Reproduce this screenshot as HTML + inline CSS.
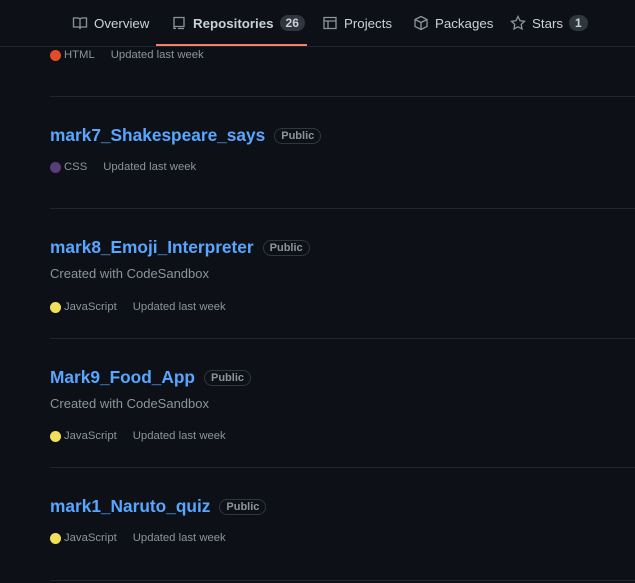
<!DOCTYPE html>
<html><head><style>
body{margin:0;width:635px;height:583px;background:#0d1117;font-family:"Liberation Sans",sans-serif;color:#8b949e;overflow:hidden;position:relative}
.nav{position:absolute;left:0;top:0;width:635px;height:46px;border-bottom:1px solid #21262d}
.tab{position:absolute;top:15px;font-size:13.3px;color:#c9d1d9;display:flex;align-items:center;gap:6px}
.cnt{background:#30363d;color:#c9d1d9;border-radius:10px;font-size:12px;padding:1px 6px;font-weight:bold}
.ul{position:absolute;left:156px;top:44px;width:151px;height:2px;background:#f78166}
.sep{position:absolute;left:50px;right:0;height:1px;background:#21262d}
.t{position:absolute;left:50px;font-size:17.3px;font-weight:bold;color:#58a6ff;display:flex;align-items:center}
.pub{font-size:11px;font-weight:bold;color:#8b949e;border:1px solid #30363d;border-radius:10px;padding:1px 6px;margin-left:9px}
.d{position:absolute;left:50px;font-size:13px;color:#8b949e}
.m{position:absolute;left:50px;font-size:11.3px;color:#8b949e;display:flex;align-items:center}
.dot{width:11px;height:11px;border-radius:50%;display:inline-block;margin-right:3px}
.up{margin-left:16px}
svg{fill:none;stroke:#8b949e;stroke-width:1.3}
</style></head><body>
<div class="nav">
<div class="tab" style="left:72px"><svg width="16" height="16" viewBox="0 0 16 16"><path d="M1.5 3h5l1.5 1v9l-1.5-1h-5zM14.5 3h-5L8 4v9l1.5-1h5z"/></svg>Overview</div>
<div class="tab" style="left:171px;font-weight:bold"><svg width="16" height="16" viewBox="0 0 16 16"><path d="M3 2.5h10v9H3zM3 11.5v2h2M7 13.5h6"/></svg>Repositories <span class="cnt">26</span></div>
<div class="tab" style="left:322px"><svg width="16" height="16" viewBox="0 0 16 16"><path d="M2 2.5h12v11H2zM2 6h12M6 6v7.5"/></svg>Projects</div>
<div class="tab" style="left:413px"><svg width="16" height="16" viewBox="0 0 16 16"><path d="M8 1.5l6 3v7l-6 3-6-3v-7zM2 4.5l6 3 6-3M8 7.5v7"/></svg>Packages</div>
<div class="tab" style="left:510px"><svg width="16" height="16" viewBox="0 0 16 16"><path d="M8 1.5l2 4.2 4.5.6-3.3 3.1.8 4.5L8 11.8l-4 2.1.8-4.5L1.5 6.3 6 5.7z"/></svg>Stars <span class="cnt">1</span></div>
</div>
<div class="ul"></div>
<div class="m" style="top:49px"><span class="dot" style="background:#e34c26"></span>HTML<span class="up">Updated last week</span></div>
<div class="sep" style="top:96px"></div>
<div class="t" style="top:125px">mark7_Shakespeare_says<span class="pub">Public</span></div>
<div class="m" style="top:161px"><span class="dot" style="background:#563d7c"></span>CSS<span class="up">Updated last week</span></div>
<div class="sep" style="top:208px"></div>
<div class="t" style="top:237px">mark8_Emoji_Interpreter<span class="pub">Public</span></div>
<div class="d" style="top:266px">Created with CodeSandbox</div>
<div class="m" style="top:301px"><span class="dot" style="background:#f1e05a"></span>JavaScript<span class="up">Updated last week</span></div>
<div class="sep" style="top:338px"></div>
<div class="t" style="top:367px">Mark9_Food_App<span class="pub">Public</span></div>
<div class="d" style="top:396px">Created with CodeSandbox</div>
<div class="m" style="top:430px"><span class="dot" style="background:#f1e05a"></span>JavaScript<span class="up">Updated last week</span></div>
<div class="sep" style="top:467px"></div>
<div class="t" style="top:496px">mark1_Naruto_quiz<span class="pub">Public</span></div>
<div class="m" style="top:532px"><span class="dot" style="background:#f1e05a"></span>JavaScript<span class="up">Updated last week</span></div>
<div class="sep" style="top:580px"></div>
</body></html>
